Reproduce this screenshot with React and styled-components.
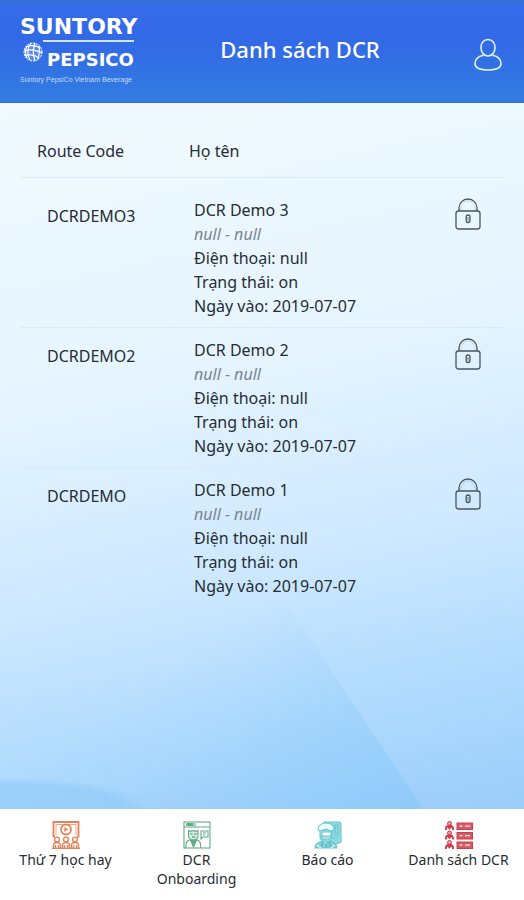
import React from 'react'
import styled, { createGlobalStyle } from 'styled-components'

const dcrList = [
  { code: 'DCRDEMO3', name: 'DCR Demo 3', phone: 'null', status: 'on', date: '2019-07-07' },
  { code: 'DCRDEMO2', name: 'DCR Demo 2', phone: 'null', status: 'on', date: '2019-07-07' },
  { code: 'DCRDEMO', name: 'DCR Demo 1', phone: 'null', status: 'on', date: '2019-07-07' },
]

const GlobeIcon = () => (
  <svg width='20' height='20' viewBox='0 0 20 20' fill='none' stroke='#fff'>
    <circle cx='10' cy='10' r='9' fill='#fff' fillOpacity='0.2' stroke='none' />
    <g strokeWidth='1.2'>
      <path d='M3 5c4-2 10-2 14 1M1 9c5-2 13-1 18 2M2 14c4-2 10-1 14 2' />
      <path d='M8 1c-4 5-4 12-1 17M12 1c-2 5-2 12 0 18M16 4c1 4 0 9-1 13M4 4c-2 4-2 8 0 12' />
    </g>
    <circle cx='10' cy='10' r='9' strokeWidth='1' strokeDasharray='2 1' />
  </svg>
)

const UserIcon = () => (
  <svg width='28' height='34' viewBox='0 0 28 34' fill='none' stroke='#e3f0ff' strokeWidth='1.6'>
    <path d='M14 1.5c-4.2 0-7 3.4-7 8 0 5 3 8.5 7 8.5s7-3.5 7-8.5c0-4.6-2.8-8-7-8z' />
    <path d='M9.5 17.2C4.5 18.3 1 21.5 1 25.5c0 4.2 5 6.5 13 6.5s13-2.3 13-6.5c0-4-3.5-7.2-8.5-8.3' />
  </svg>
)

const LockIcon = () => (
  <svg width='26' height='32' viewBox='0 0 26 32' fill='none' stroke='#4a555e' strokeWidth='1.3'>
    <rect x='1' y='13' width='24' height='18' rx='2.5' />
    <path d='M4 13V10a9 9 0 0 1 18 0v3' />
    <path d='M6 13V10a7 7 0 0 1 14 0V13' strokeWidth='0.5' opacity='0.4' />
    <rect x='11.2' y='17' width='3.8' height='7.5' rx='1.9' />
    <path d='M13 19v3.5' strokeWidth='0.8' />
  </svg>
)

const ClassIcon = () => (
  <svg width='28' height='28' viewBox='0 0 28 28' fill='none' stroke='#e58258' strokeWidth='1.4'>
    <path d='M3 15.5H1.5V1h25v14.5H25' strokeWidth='1.8' />
    <path d='M4 14V3.5h20V14' strokeWidth='0.7' />
    <circle cx='14' cy='8.5' r='5' strokeWidth='1.8' />
    <path d='M12.5 6.5v4l3.5-2z' fill='#e58258' strokeWidth='0.5' />
    {[5, 14, 23].map((x) => (
      <g key={x}>
        <circle cx={x} cy='18.5' r='2.4' />
        <path d={`M${x - 3.5} 27v-2.5c0-2 1.5-3 3.5-3s3.5 1 3.5 3V27M${x - 1.5} 24v3M${x + 1.5} 24v3`} />
      </g>
    ))}
    <path d='M0 27.3h28' />
  </svg>
)

const OnboardingIcon = () => (
  <svg width='28' height='28' viewBox='0 0 28 28' fill='none' stroke='#62ad88' strokeWidth='1.1'>
    <rect x='1' y='1' width='26' height='26' />
    <path d='M1 6h26M3 3.5h7M12 2v4' />
    <path d='M4 2.5h6v2H4z' fill='#62ad88' fillOpacity='0.6' />
    <path d='M5.5 9.5l2 1c1.5-1 4-1 5.5 0l2-1v5c0 3-2 4.5-4.7 4.5s-4.8-1.5-4.8-4.5z' fill='#62ad88' fillOpacity='0.25' />
    <path d='M7.5 13h2M11.5 13h2M9 16h3' strokeWidth='1.5' />
    <path d='M3 27v-4c0-2 2-4 4.5-4l2.8 3 2.8-3c2.4 0 4.4 2 4.4 4v4' />
    <path d='M7.5 19l3 7 3-7z' fill='#62ad88' />
    <path d='M18 10h7v6h-5l-2 2zM20 12h3M20 14h2' />
  </svg>
)

const ReportIcon = () => (
  <svg width='28' height='28' viewBox='0 0 28 28' fill='none' stroke='#6cc6cf' strokeWidth='1.1'>
    <path d='M10 1h15.5L27 2.5V21l-3 1.5H13z' fill='#8edbe1' />
    <path d='M21 4h3v10h-3zM19 17h5' />
    <path d='M6 9h12v7c0 3-2.5 5-6 5s-6-2-6-5z' fill='#a9e4e8' />
    <path d='M4 9c0-4 3-7 8-7s8 3 8 7l-3 1-5-2-6 2z' fill='#e6ffff' />
    <path d='M8 11h9v4H8z' fill='#fff' />
    <path d='M7 14c0 3 2 5 5 5s5-2 5-5' />
    <path d='M1 27c0-4 3-6 7-6.5l4 3 4-3c4 .5 7 2.5 7 6.5z' fill='#7fd2da' />
    <path d='M9 21l-2 5M15 21l2 5M12 23v4' stroke='#4fb7c3' />
    <path d='M3 24l4 3M21 24l-4 3' stroke='#dff' />
  </svg>
)

const ListIcon = () => (
  <svg width='28' height='28' viewBox='0 0 28 28' fill='none' stroke='#cf3d4b'>
    {[0, 9.5, 19].map((y) => (
      <g key={y} transform={`translate(0 ${y})`}>
        <circle cx='4.5' cy='2.5' r='2' fill='#cf3d4b' fillOpacity='0.5' />
        <path d='M.8 9c0-2.5 1.5-4.2 3.7-4.2S8.200 6.500 8.200 9M3 5.500l1.500 1.700L6 5.500' strokeWidth='2' />
        <rect x='12' y='2' width='15.5' height='6.5' fill='#cf3d4b' fillOpacity='0.85' />
        <path d='M14.5 5.2h3M20 5.2h5' stroke='#ffe5e5' strokeWidth='1.2' />
      </g>
    ))}
  </svg>
)

const tabs = [
  { label: 'Thứ 7 học hay', icon: <ClassIcon /> },
  { label: 'DCR Onboarding', icon: <OnboardingIcon /> },
  { label: 'Báo cáo', icon: <ReportIcon /> },
  { label: 'Danh sách DCR', icon: <ListIcon />, active: true },
]

const App = () => {
  return (
    <Page>
      <GlobalStyle />
      <Header>
        <Logo>
          <Suntory>SUNTORY</Suntory>
          <Pepsico>
            <GlobeIcon />
            <span>PEPSICO</span>
          </Pepsico>
          <Tagline>Suntory PepsiCo Vietnam Beverage</Tagline>
        </Logo>
        <Title>Danh sách DCR</Title>
        <UserButton type='button' aria-label='Tài khoản'>
          <UserIcon />
        </UserButton>
      </Header>

      <Main>
        <Table>
          <colgroup>
            <CodeColumn />
            <col />
            <LockColumn />
          </colgroup>
          <thead>
            <tr>
              <HeadCell>Route Code</HeadCell>
              <HeadCell colSpan={2}>Họ tên</HeadCell>
            </tr>
          </thead>
          <tbody>
            {dcrList.map((dcr) => (
              <tr key={dcr.code}>
                <CodeCell>{dcr.code}</CodeCell>
                <InfoCell>
                  <div>{dcr.name}</div>
                  <Muted>null - null</Muted>
                  <div>Điện thoại: {dcr.phone}</div>
                  <div>Trạng thái: {dcr.status}</div>
                  <div>Ngày vào: {dcr.date}</div>
                </InfoCell>
                <LockCell>
                  <LockButton type='button' aria-label={`Khóa ${dcr.name}`}>
                    <LockIcon />
                  </LockButton>
                </LockCell>
              </tr>
            ))}
          </tbody>
        </Table>
      </Main>

      <TabBar>
        {tabs.map(({ label, icon, active }) => (
          <Tab key={label} href='#' aria-current={active ? 'page' : undefined}>
            {icon}
            <TabLabel>{label}</TabLabel>
          </Tab>
        ))}
      </TabBar>
    </Page>
  )
}

export default App

const GlobalStyle = createGlobalStyle`
  * {
    box-sizing: border-box;
  }

  body {
    margin: 0;
    font-family: 'Noto Sans', 'Open Sans', sans-serif;
    color: #262d33;
  }

  svg {
    display: block;
    flex-shrink: 0;
  }
`

const Page = styled.div`
  min-height: 100vh;
  display: flex;
  flex-direction: column;
`

const Header = styled.header`
  display: flex;
  align-items: center;
  padding: 14px 22px 14px 20px;
  color: #fff;
  background: linear-gradient(#3470d0 0, #356bea 6px, #3269e5 40%, #327de2 100%);
  border-bottom: 1px solid #2b73cb;
`

const Logo = styled.div`
  width: 118px;
`

const Suntory = styled.div`
  font: bold 22px/26px 'DejaVu Sans', sans-serif;
`

const Pepsico = styled.div`
  display: flex;
  align-items: flex-start;
  padding-left: 3px;
  font: bold 18px/22px 'DejaVu Sans', sans-serif;

  svg {
    margin-top: 2px;
  }

  span {
    padding: 7px 0 1px 4px;
    border-top: 2px solid #cfe4ff;
  }
`

const Tagline = styled.div`
  font: 7px/16px 'Liberation Sans', sans-serif;
  color: #c3dcff;
  white-space: nowrap;
`

const Title = styled.h1`
  flex: 1;
  margin: 0;
  padding-bottom: 4px;
  font-size: 22px;
  font-weight: 500;
  line-height: 30px;
  text-align: center;
`

const UserButton = styled.button`
  display: flex;
  justify-content: flex-end;
  width: 40px;
  padding: 8px 0 0;
  border: none;
  background: none;
  cursor: pointer;
`

const Main = styled.main`
  flex: 1;
  position: relative;
  z-index: 0;
  padding: 0 21px;
  background:
    radial-gradient(150px 32px at 0 100%, rgba(125, 195, 245, 0.35) 80%, rgba(125, 195, 245, 0) 100%),
    linear-gradient(168deg, #f1faff 0%, #e5f4ff 38%, #cfe9ff 62%, #b1dbfd 82%, #9acdfa 100%);

  /* soft light ray crossing the lower right corner */
  &::before {
    content: '';
    position: absolute;
    inset: 0;
    z-index: -1;
    background: conic-gradient(
      from 147deg at 54% 70%,
      rgba(120, 194, 250, 0.4) 0deg,
      rgba(120, 194, 250, 0) 90deg,
      rgba(120, 194, 250, 0) 359deg,
      rgba(120, 194, 250, 0.4) 360deg
    );
    mask-image: linear-gradient(transparent 70%, #000 100%);
  }
`

const Table = styled.table`
  width: 100%;
  table-layout: fixed;
  border-collapse: collapse;
  font-size: 16px;
  line-height: 24px;

  tbody::before {
    content: '';
    display: block;
    height: 10px;
  }

  tbody tr + tr {
    border-top: 1px solid #d9eaf6;
  }
`

const CodeColumn = styled.col`
  width: 152px;
`

const LockColumn = styled.col`
  width: 80px;
`

const HeadCell = styled.th`
  padding: 36px 0 14px 16px;
  border-bottom: 1px solid #d9eaf6;
  font-weight: 400;
  text-align: left;
`

const Cell = styled.td`
  padding: 10px 0 9px;
  vertical-align: top;
`

const CodeCell = styled(Cell)`
  padding-top: 16px;
  padding-left: 26px;
`

const InfoCell = styled(Cell)`
  padding-left: 21px;
`

const Muted = styled.div`
  font-style: italic;
  color: #7a858e;
`

const LockCell = styled(Cell)`
  padding-right: 22px;
`

const LockButton = styled.button`
  display: block;
  margin-left: auto;
  padding: 0;
  border: none;
  background: none;
  cursor: pointer;
`

const TabBar = styled.nav`
  display: grid;
  grid-template-columns: repeat(4, 1fr);
  min-height: 91px;
  padding-top: 12px;
  background: #fff;
`

const Tab = styled.a`
  display: flex;
  flex-direction: column;
  align-items: center;
  color: inherit;
  text-decoration: none;
`

const TabLabel = styled.span`
  max-width: 104px;
  margin-top: 1px;
  font-size: 14px;
  line-height: 19px;
  text-align: center;
`
